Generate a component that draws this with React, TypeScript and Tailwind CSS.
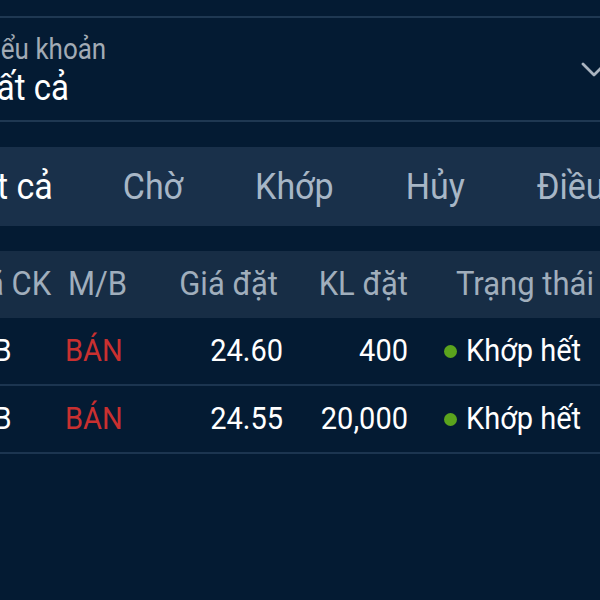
import React from 'react';

const tabs = ['Tất cả', 'Chờ', 'Khớp', 'Hủy', 'Điều kiện'];

const orders = [
  { code: 'STB', side: 'BÁN', price: '24.60', qty: '400', status: 'Khớp hết' },
  { code: 'STB', side: 'BÁN', price: '24.55', qty: '20,000', status: 'Khớp hết' },
];

export default function App() {
  return (
    <div
      className="w-[600px] h-[600px] overflow-hidden bg-[#041b33]"
      style={{ fontFamily: 'Roboto, "Noto Sans", sans-serif' }}
    >
      <div className="h-[16px]" />

      {/* Account selector */}
      <div className="border-y-2 border-[#1f3852]">
        <div className="-ml-[21px] w-[640px] flex items-center justify-between pr-[12px] pt-[15px] pb-[14px]">
          <div className="flex flex-col gap-[4px]">
            <span className="text-[26px] leading-[32px] text-[#a2abb5] scale-y-110">Tiểu khoản</span>
            <span className="text-[33px] leading-[37px] text-white scale-y-110">Tất cả</span>
          </div>
          <svg width="26" height="17" viewBox="0 0 26 17" fill="none">
            <path d="M2 3 L13 14 L24 3" stroke="#aab4c0" strokeWidth="2.8" strokeLinecap="round" strokeLinejoin="round" />
          </svg>
        </div>
      </div>

      <div className="h-[25px]" />

      {/* Status tabs */}
      <div className="h-[79px] bg-[#19304a] flex items-center">
        <div className="-ml-[40px] flex items-center gap-[72px] whitespace-nowrap">
          {tabs.map((t, i) => (
            <span
              key={t}
              className={
                i === 0
                  ? 'text-[34px] text-white scale-y-110 -mr-[2px]'
                  : 'text-[34px] text-[#a7b6c6] scale-y-110'
              }
            >
              {t}
            </span>
          ))}
        </div>
      </div>

      <div className="h-[25px]" />

      {/* Order table */}
      <div className="-ml-[36px] w-[680px]">
        <div className="h-[67px] bg-[#172d45] flex items-center text-[31px] text-[#a0aebc] whitespace-nowrap">
          <div className="-ml-[4px] w-[108px] scale-y-110">Mã CK</div>
          <div className="w-[81px] scale-y-110">M/B</div>
          <div className="w-[129px] text-right scale-y-110">Giá đặt</div>
          <div className="w-[130px] text-right scale-y-110">KL đặt</div>
          <div className="pl-[48px] scale-y-110">Trạng thái</div>
        </div>
        {orders.map((o, i) => (
          <div
            key={i}
            className="h-[68px] border-b-2 border-[#1c3550] flex items-center text-[29px] whitespace-nowrap"
          >
            <div className="-ml-[5px] w-[106px] text-white scale-y-110">{o.code}</div>
            <div className="w-[84px] text-[#c93030] scale-y-110">{o.side}</div>
            <div className="w-[134px] text-right text-white scale-y-110">{o.price}</div>
            <div className="w-[125px] text-right text-white scale-y-110">{o.qty}</div>
            <div className="pl-[36px] flex items-center gap-[9px] text-white">
              <span className="w-[13px] h-[13px] rounded-full bg-[#5ba41d]" />
              <span className="scale-y-110">{o.status}</span>
            </div>
          </div>
        ))}
      </div>
    </div>
  );
}
